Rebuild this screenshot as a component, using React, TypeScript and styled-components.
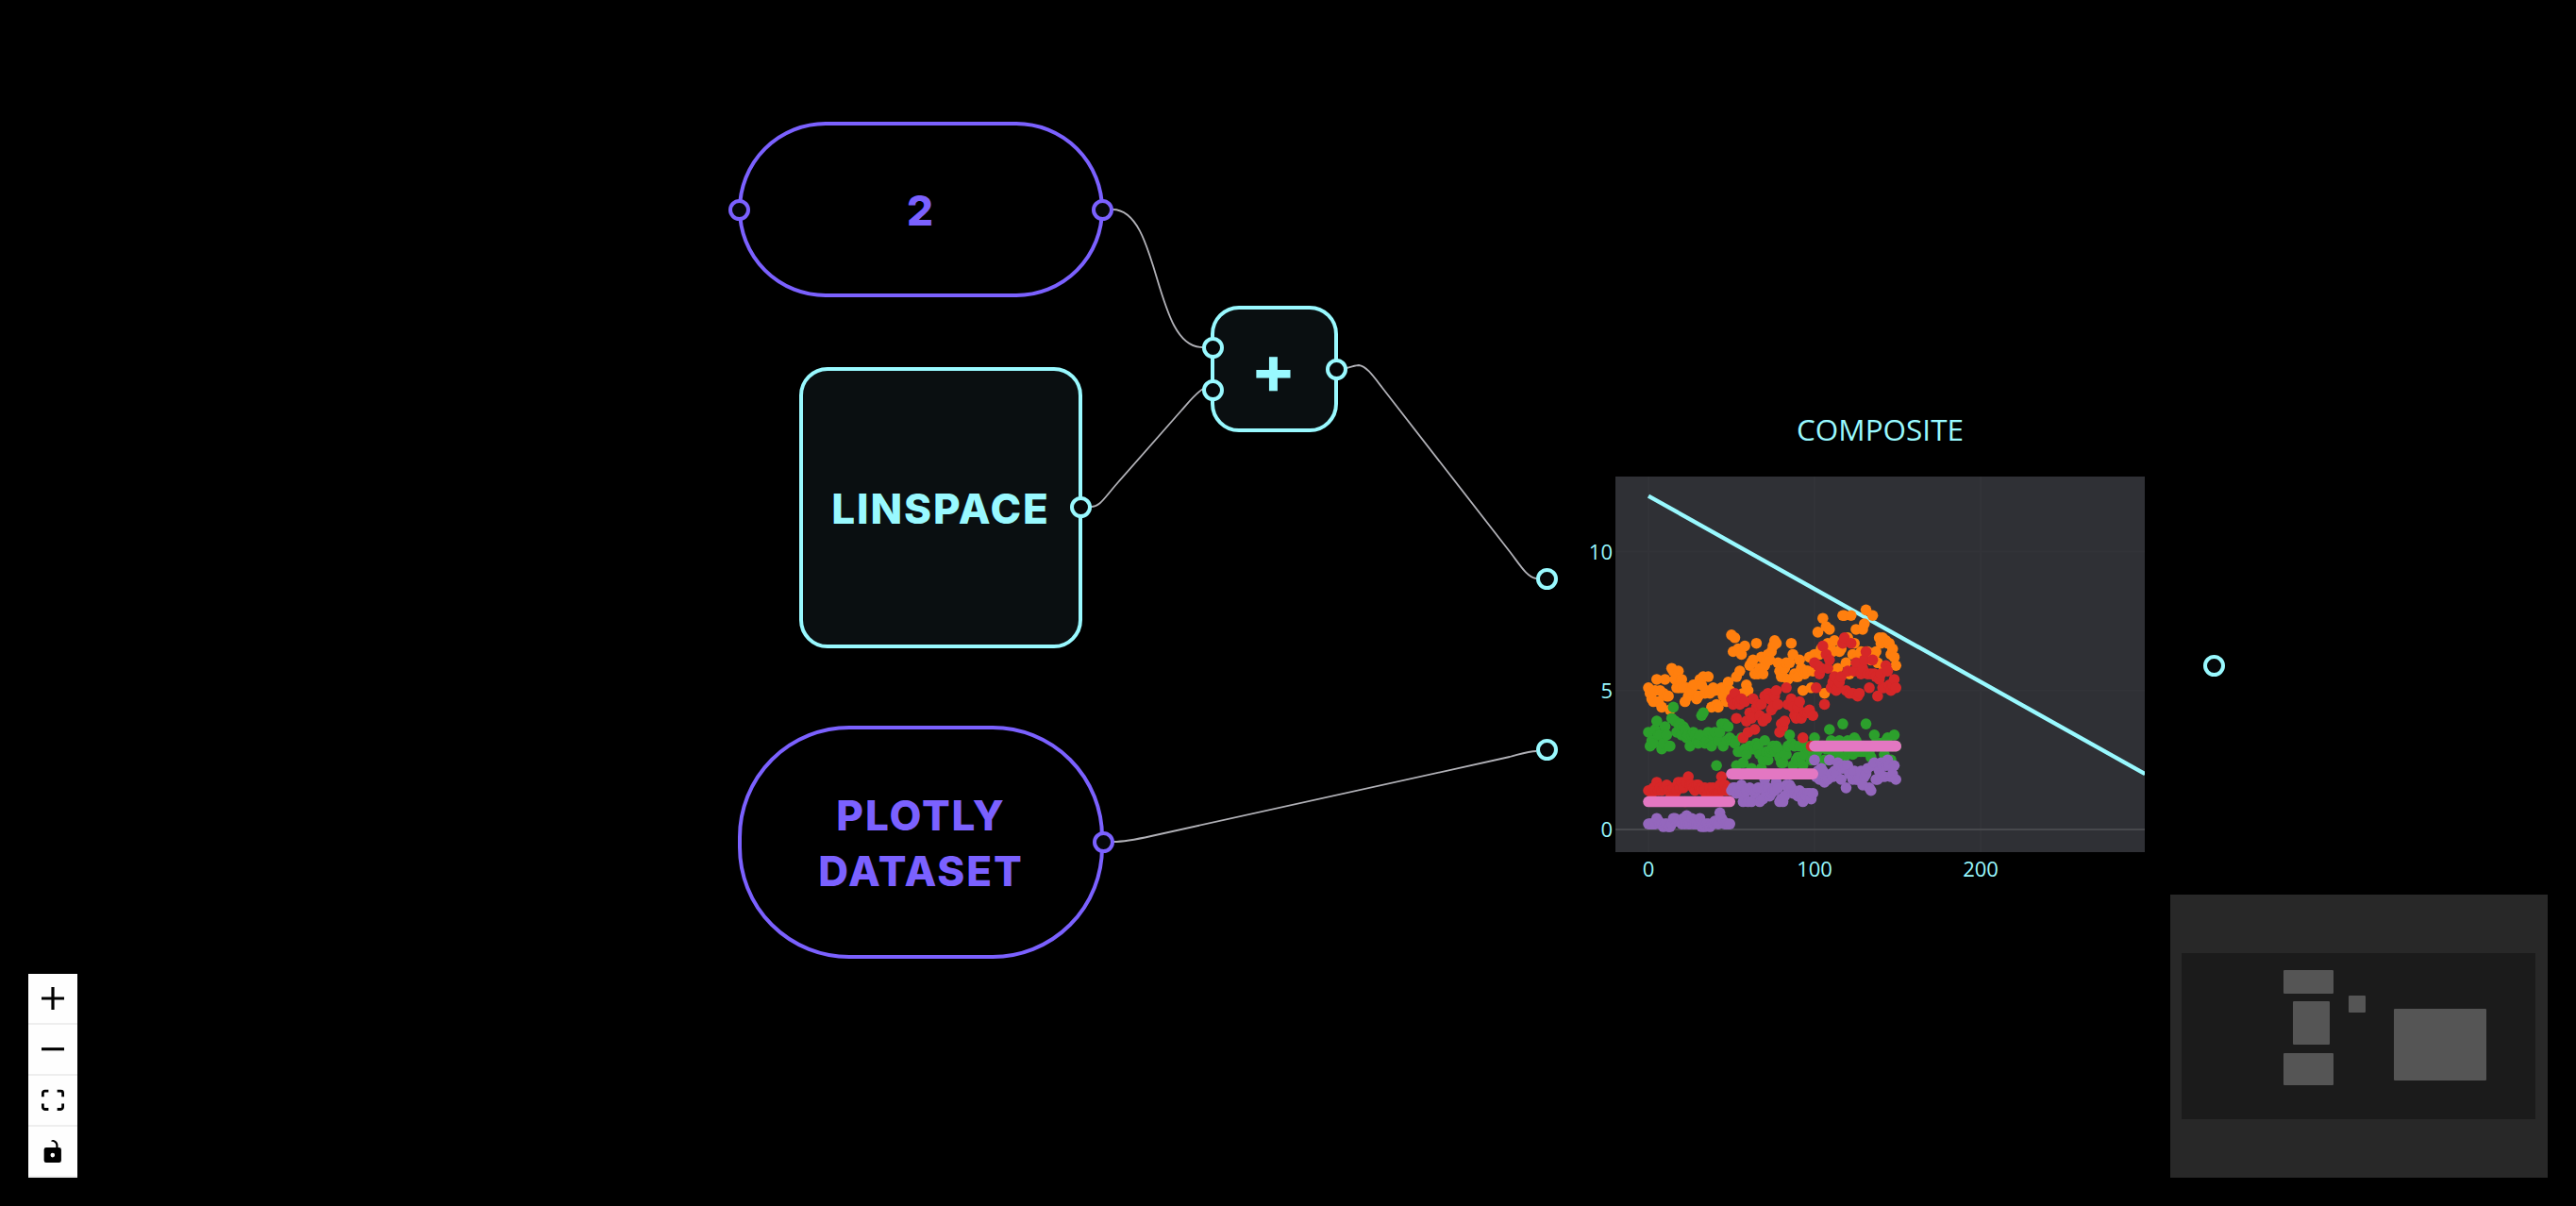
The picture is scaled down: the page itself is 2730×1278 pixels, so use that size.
import React from "react";
import styled, { createGlobalStyle } from "styled-components";

const CYAN = "#99f9ff";
const PURPLE = "#7b61ff";

const Global = createGlobalStyle`
  html, body { margin: 0; padding: 0; background: #000; overflow: hidden; }
  #root { width: 2730px; height: 1278px; }
`;

const Canvas = styled.div`
  position: relative;
  width: 2730px;
  height: 1278px;
  background: #000;
  overflow: hidden;
`;

const EdgeLayer = styled.svg`
  position: absolute;
  inset: 0;
`;

const Edge = styled.path`
  fill: none;
  stroke: #b1b1b7;
  stroke-width: 1.8;
`;

const Node = styled.div<{ $x: number; $y: number; $w: number; $h: number; $r: number; $c: string; $fill: string }>`
  position: absolute;
  box-sizing: border-box;
  left: ${(p) => p.$x}px;
  top: ${(p) => p.$y}px;
  width: ${(p) => p.$w}px;
  height: ${(p) => p.$h}px;
  padding-top: 3px;
  display: flex;
  align-items: center;
  justify-content: center;
  text-align: center;
  border: 4px solid ${(p) => p.$c};
  border-radius: ${(p) => p.$r}px;
  background: ${(p) => p.$fill};
  color: ${(p) => p.$c};
  font-family: Inter, "Liberation Sans", sans-serif;
  font-weight: 800;
  font-size: 44px;
  line-height: 59px;
  letter-spacing: 1.9px;
`;

const PlusGlyph = styled.span`
  margin-top: -3px;
  margin-right: 2px;
  font-size: 72px;
  line-height: 72px;
  letter-spacing: 0;
  font-weight: 700;
`;

const Handle = styled.span<{ $x: number; $y: number; $c: string }>`
  position: absolute;
  box-sizing: border-box;
  left: ${(p) => p.$x - 11.5}px;
  top: ${(p) => p.$y - 11.5}px;
  width: 23px;
  height: 23px;
  border-radius: 50%;
  border: 4.5px solid ${(p) => p.$c};
  background: #050709;
`;

const CompositeNode = styled.div`
  position: absolute;
  left: 1639px;
  top: 433px;
  width: 707px;
  display: flex;
  flex-direction: column;
  align-items: center;
`;

const CompositeTitle = styled.div`
  height: 44px;
  line-height: 44px;
  color: ${CYAN};
  font-family: "Open Sans", "Liberation Sans", sans-serif;
  font-weight: 400;
  font-size: 31.5px;
`;

const Chart = styled.svg`
  display: block;
  width: 707px;
  height: 470px;
`;

const TickLabel = styled.text`
  fill: ${CYAN};
  font-family: "Open Sans", "Liberation Sans", sans-serif;
  font-size: 22px;
  font-weight: 400;
`;

const Controls = styled.div`
  position: absolute;
  left: 30px;
  top: 1032px;
  width: 52px;
  display: flex;
  flex-direction: column;
  background: #fff;
`;

const ControlButton = styled.button`
  box-sizing: border-box;
  width: 52px;
  height: 54px;
  padding: 0;
  border: 0;
  border-bottom: 2px solid #eee;
  background: #fefefe;
  display: flex;
  align-items: center;
  justify-content: center;
  svg { width: 24px; height: 24px; fill: #000; display: block; }
`;

const MiniMap = styled.svg`
  position: absolute;
  left: 2300px;
  top: 948px;
  width: 400px;
  height: 300px;
  display: block;
`;

const IRIS = `5.1,3.5,1.4,.2 4.9,3,1.4,.2 4.7,3.2,1.3,.2 4.6,3.1,1.5,.2 5,3.6,1.4,.2 5.4,3.9,1.7,.4 4.6,3.4,1.4,.3 5,3.4,1.5,.2 4.4,2.9,1.4,.2 4.9,3.1,1.5,.1 5.4,3.7,1.5,.2 4.8,3.4,1.6,.2 4.8,3,1.4,.1 4.3,3,1.1,.1 5.8,4,1.2,.2 5.7,4.4,1.5,.4 5.4,3.9,1.3,.4 5.1,3.5,1.4,.3 5.7,3.8,1.7,.3 5.1,3.8,1.5,.3 5.4,3.4,1.7,.2 5.1,3.7,1.5,.4 4.6,3.6,1,.2 5.1,3.3,1.7,.5 4.8,3.4,1.9,.2 5,3,1.6,.2 5,3.4,1.6,.4 5.2,3.5,1.5,.2 5.2,3.4,1.4,.2 4.7,3.2,1.6,.2 4.8,3.1,1.6,.2 5.4,3.4,1.5,.4 5.2,4.1,1.5,.1 5.5,4.2,1.4,.2 4.9,3.1,1.5,.1 5,3.2,1.2,.2 5.5,3.5,1.3,.2 4.9,3.1,1.5,.1 4.4,3,1.3,.2 5.1,3.4,1.5,.2 5,3.5,1.3,.3 4.5,2.3,1.3,.3 4.4,3.2,1.3,.2 5,3.5,1.6,.6 5.1,3.8,1.9,.4 4.8,3,1.4,.3 5.1,3.8,1.6,.2 4.6,3.2,1.4,.2 5.3,3.7,1.5,.2 5,3.3,1.4,.2
7,3.2,4.7,1.4 6.4,3.2,4.5,1.5 6.9,3.1,4.9,1.5 5.5,2.3,4,1.3 6.5,2.8,4.6,1.5 5.7,2.8,4.5,1.3 6.3,3.3,4.7,1.6 4.9,2.4,3.3,1 6.6,2.9,4.6,1.3 5.2,2.7,3.9,1.4 5,2,3.5,1 5.9,3,4.2,1.5 6,2.2,4,1 6.1,2.9,4.7,1.4 5.6,2.9,3.6,1.3 6.7,3.1,4.4,1.4 5.6,3,4.5,1.5 5.8,2.7,4.1,1 6.2,2.2,4.5,1.5 5.6,2.5,3.9,1.1 5.9,3.2,4.8,1.8 6.1,2.8,4,1.3 6.3,2.5,4.9,1.5 6.1,2.8,4.7,1.2 6.4,2.9,4.3,1.3 6.6,3,4.4,1.4 6.8,2.8,4.8,1.4 6.7,3,5,1.7 6,2.9,4.5,1.5 5.7,2.6,3.5,1 5.5,2.4,3.8,1.1 5.5,2.4,3.7,1 5.8,2.7,3.9,1.2 6,2.7,5.1,1.6 5.4,3,4.5,1.5 6,3.4,4.5,1.6 6.7,3.1,4.7,1.5 6.3,2.3,4.4,1.3 5.6,3,4.1,1.3 5.5,2.5,4,1.3 5.5,2.6,4.4,1.2 6.1,3,4.6,1.4 5.8,2.6,4,1.2 5,2.3,3.3,1 5.6,2.7,4.2,1.3 5.7,3,4.2,1.2 5.7,2.9,4.2,1.3 6.2,2.9,4.3,1.3 5.1,2.5,3,1.1 5.7,2.8,4.1,1.3
6.3,3.3,6,2.5 5.8,2.7,5.1,1.9 7.1,3,5.9,2.1 6.3,2.9,5.6,1.8 6.5,3,5.8,2.2 7.6,3,6.6,2.1 4.9,2.5,4.5,1.7 7.3,2.9,6.3,1.8 6.7,2.5,5.8,1.8 7.2,3.6,6.1,2.5 6.5,3.2,5.1,2 6.4,2.7,5.3,1.9 6.8,3,5.5,2.1 5.7,2.5,5,2 5.8,2.8,5.1,2.4 6.4,3.2,5.3,2.3 6.5,3,5.5,1.8 7.7,3.8,6.7,2.2 7.7,2.6,6.9,2.3 6,2.2,5,1.5 6.9,3.2,5.7,2.3 5.6,2.8,4.9,2 7.7,2.8,6.7,2 6.3,2.7,4.9,1.8 6.7,3.3,5.7,2.1 7.2,3.2,6,1.8 6.2,2.8,4.8,1.8 6.1,3,4.9,1.8 6.4,2.8,5.6,2.1 7.2,3,5.8,1.6 7.4,2.8,6.1,1.9 7.9,3.8,6.4,2 6.4,2.8,5.6,2.2 6.3,2.8,5.1,1.5 6.1,2.6,5.6,1.4 7.7,3,6.1,2.3 6.3,3.4,5.6,2.4 6.4,3.1,5.5,1.8 6,3,4.8,1.8 6.9,3.1,5.4,2.1 6.7,3.1,5.6,2.4 6.9,3.1,5.1,2.3 5.8,2.7,5.1,1.9 6.8,3.2,5.9,2.3 6.7,3.3,5.7,2.5 6.7,3,5.2,2.3 6.3,2.5,5,1.9 6.5,3,5.2,2 6.2,3.4,5.4,2.3 5.9,3,5.1,1.8`
  .split(/\s+/)
  .map((row) => row.split(",").map(Number));

const px = (v: number) => 1747 + v * 1.76;
const py = (v: number) => 879 - v * 29.45;

const SERIES: { color: string; col: number }[] = [
  { color: "#ff7f0e", col: 0 },
  { color: "#2ca02c", col: 1 },
  { color: "#d62728", col: 2 },
  { color: "#9467bd", col: 3 },
];

const CompositeChart = () => (
  <Chart viewBox="1639 477 707 470">
    <defs>
      <clipPath id="plot-area">
        <rect x={1712} y={505} width={561} height={398} />
      </clipPath>
    </defs>
    <rect x={1712} y={505} width={561} height={398} fill="#2f3035" />
    {[0, 100, 200].map((v) => (
      <line key={v} x1={px(v)} x2={px(v)} y1={505} y2={903} stroke="#323338" strokeWidth={2} />
    ))}
    {[5, 10].map((v) => (
      <line key={v} x1={1712} x2={2273} y1={py(v)} y2={py(v)} stroke="#323338" strokeWidth={2} />
    ))}
    <line x1={1712} x2={2273} y1={879} y2={879} stroke="#47484c" strokeWidth={2} />
    <g clipPath="url(#plot-area)">
      <line x1={px(0)} y1={py(12)} x2={px(299)} y2={py(2)} stroke={CYAN} strokeWidth={4.4} />
      {SERIES.map((s) =>
        IRIS.map((row, i) => (
          <circle key={`${s.col}-${i}`} cx={px(i)} cy={py(row[s.col])} r={5.8} fill={s.color} />
        ))
      )}
      {[0, 1, 2].map((g) => (
        <line
          key={g}
          x1={px(g * 50)}
          x2={px(g * 50 + 49)}
          y1={py(g + 1)}
          y2={py(g + 1)}
          stroke="#e377c2"
          strokeWidth={11.6}
          strokeLinecap="round"
        />
      ))}
    </g>
    {[0, 100, 200].map((v) => (
      <TickLabel key={v} x={px(v)} y={929} textAnchor="middle">
        {v}
      </TickLabel>
    ))}
    {[0, 5, 10].map((v) => (
      <TickLabel key={v} x={1709} y={py(v) + 8} textAnchor="end">
        {v}
      </TickLabel>
    ))}
  </Chart>
);

const PlusIcon = () => (
  <svg viewBox="0 0 32 32">
    <path d="M32 18.133H18.133V32h-4.266V18.133H0v-4.266h13.867V0h4.266v13.867H32z" />
  </svg>
);
const MinusIcon = () => (
  <svg viewBox="0 0 32 5">
    <path d="M0 0h32v4.2H0z" />
  </svg>
);
const FitIcon = () => (
  <svg viewBox="0 0 32 30">
    <path d="M3.692 4.63c0-.53.4-.938.939-.938h5.215V0H4.708C2.13 0 0 2.054 0 4.63v5.216h3.692V4.631zM27.354 0h-5.2v3.692h5.17c.53 0 .984.4.984.939v5.215H32V4.631A4.624 4.624 0 0027.354 0zm.954 24.83c0 .532-.4.94-.939.94h-5.215v3.768h5.215c2.577 0 4.631-2.13 4.631-4.707v-5.139h-3.692v5.139zm-23.677.94c-.531 0-.939-.4-.939-.94v-5.138H0v5.139c0 2.577 2.13 4.707 4.708 4.707h5.138V25.77H4.631z" />
  </svg>
);
const UnlockIcon = () => (
  <svg viewBox="0 0 25 32">
    <path d="M21.333 10.667H19.81V7.619C19.81 3.429 16.38 0 12.19 0c-4.114 1.828-1.37 2.133.305 2.438 1.676.305 4.42 2.59 4.42 5.181v3.048H3.047A3.056 3.056 0 000 13.714v15.238A3.056 3.056 0 003.048 32h18.285a3.056 3.056 0 003.048-3.048V13.714a3.056 3.056 0 00-3.048-3.047zM12.19 24.533a3.056 3.056 0 01-3.047-3.047 3.056 3.056 0 013.047-3.048 3.056 3.056 0 013.048 3.048 3.056 3.056 0 01-3.048 3.047z" />
  </svg>
);

const MINI_NODES = [
  [120, 80, 53, 25],
  [130, 113, 39, 46],
  [120, 168, 53, 34],
  [189, 107, 18, 18],
  [237, 121, 98, 76],
];

export default function App() {
  return (
    <Canvas>
      <Global />
      <EdgeLayer width={2730} height={1278}>
        <Edge d="M1179 222 C1230 222 1222 368 1274 368" />
        <Edge d="M1156 537 C1166 537 1170 528 1185 511 L1252 435 C1260 426 1267 417 1275 412" />
        <Edge d="M1427 390 C1432 389 1437 387 1440 387 C1448 388 1455 398 1465 411 L1598 582 C1610 597 1618 612 1628 613" />
        <Edge d="M1180 892 C1192 892 1202 890 1220 886 L1600 802 C1610 799.5 1620 796 1628 796" />
      </EdgeLayer>

      <Node $x={782} $y={129} $w={388} $h={186} $r={93} $c={PURPLE} $fill="#000">
        2
        <Handle $x={-3} $y={89} $c={PURPLE} />
        <Handle $x={382} $y={89} $c={PURPLE} />
      </Node>

      <Node $x={847} $y={389} $w={300} $h={298} $r={30} $c={CYAN} $fill="#0a0f11">
        LINSPACE
        <Handle $x={294} $y={144} $c={CYAN} />
      </Node>

      <Node $x={1283} $y={324} $w={135} $h={134} $r={30} $c={CYAN} $fill="#0a0f11">
        <PlusGlyph>+</PlusGlyph>
        <Handle $x={-2} $y={40} $c={CYAN} />
        <Handle $x={-2} $y={85} $c={CYAN} />
        <Handle $x={129} $y={63} $c={CYAN} />
      </Node>

      <Node $x={782} $y={769} $w={388} $h={247} $r={118} $c={PURPLE} $fill="#000">
        PLOTLY
        <br />
        DATASET
        <Handle $x={383} $y={119} $c={PURPLE} />
      </Node>

      <CompositeNode>
        <CompositeTitle>COMPOSITE</CompositeTitle>
        <CompositeChart />
        <Handle $x={0} $y={180} $c={CYAN} />
        <Handle $x={0} $y={361} $c={CYAN} />
        <Handle $x={707} $y={272} $c={CYAN} />
      </CompositeNode>

      <Controls>
        <ControlButton aria-label="zoom in"><PlusIcon /></ControlButton>
        <ControlButton aria-label="zoom out"><MinusIcon /></ControlButton>
        <ControlButton aria-label="fit view"><FitIcon /></ControlButton>
        <ControlButton aria-label="toggle interactivity"><UnlockIcon /></ControlButton>
      </Controls>

      <MiniMap viewBox="0 0 400 300">
        <rect width={400} height={300} fill="#282828" />
        <rect x={12} y={62} width={375} height={176} fill="#1b1b1b" />
        {MINI_NODES.map(([x, y, w, h]) => (
          <rect key={`${x}-${y}`} x={x} y={y} width={w} height={h} rx={1} fill="#555" />
        ))}
      </MiniMap>
    </Canvas>
  );
}
